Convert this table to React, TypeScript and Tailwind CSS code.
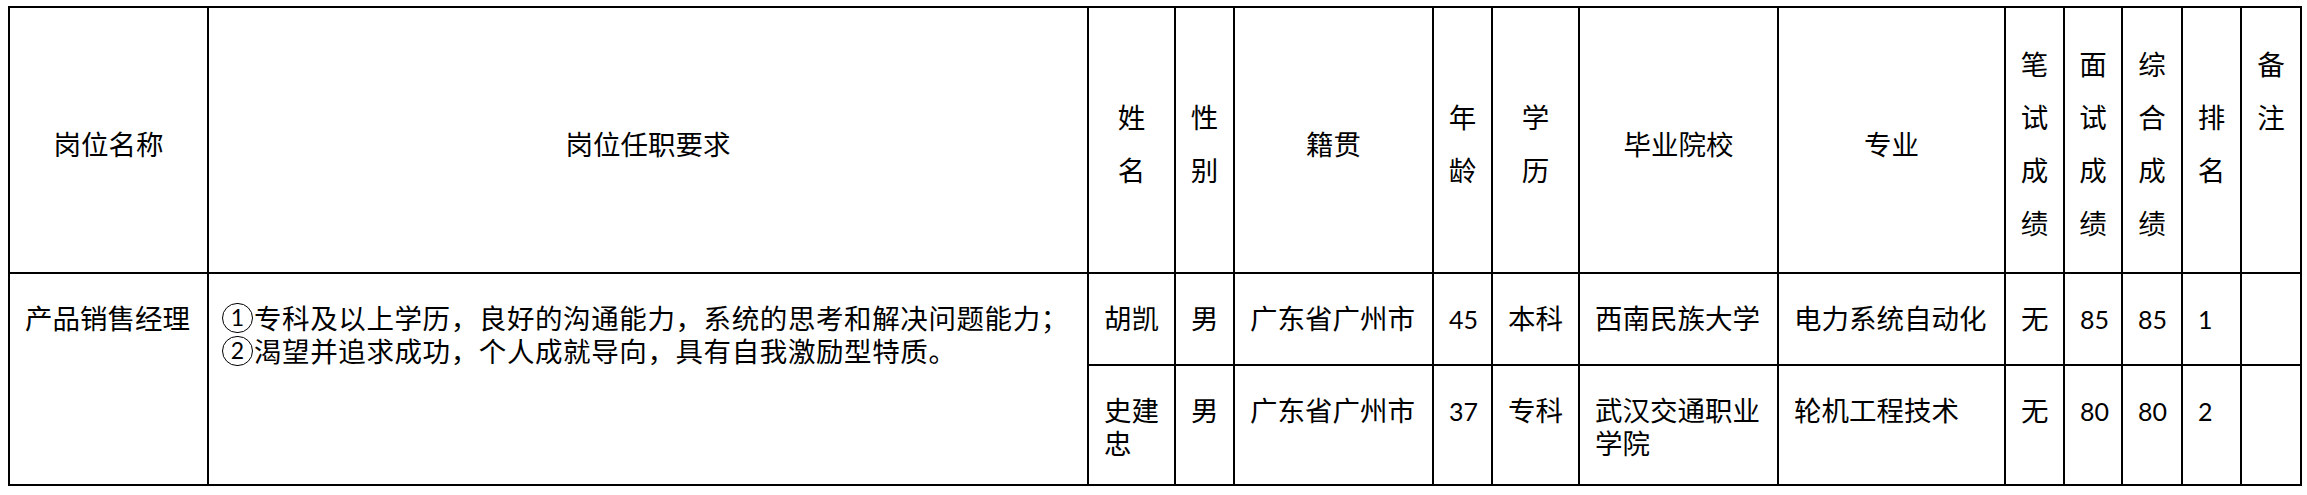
const header: { label: string; vertical?: string[] }[] = [
  { label: "岗位名称" },
  { label: "岗位任职要求" },
  { label: "姓名", vertical: ["姓", "名"] },
  { label: "性别", vertical: ["性", "别"] },
  { label: "籍贯" },
  { label: "年龄", vertical: ["年", "龄"] },
  { label: "学历", vertical: ["学", "历"] },
  { label: "毕业院校" },
  { label: "专业" },
  { label: "笔试成绩", vertical: ["笔", "试", "成", "绩"] },
  { label: "面试成绩", vertical: ["面", "试", "成", "绩"] },
  { label: "综合成绩", vertical: ["综", "合", "成", "绩"] },
  { label: "排名", vertical: ["排", "名"] },
  // 备注 sits on the first two lines of a four-line block
  { label: "备注", vertical: ["备", "注", "", ""] },
];

const candidates = [
  ["胡凯", "男", "广东省广州市", "45", "本科", "西南民族大学", "电力系统自动化", "无", "85", "85", "1", ""],
  ["史建忠", "男", "广东省广州市", "37", "专科", "武汉交通职业学院", "轮机工程技术", "无", "80", "80", "2", ""],
];

const requirements = [
  "专科及以上学历，良好的沟通能力，系统的思考和解决问题能力；",
  "渴望并追求成功，个人成就导向，具有自我激励型特质。",
];

const cell = "border-r-2 border-b-2 border-black";

const Value = ({ text }: { text: string }) =>
  /^\d+$/.test(text) ? <span className="font-['Lato',sans-serif] text-[25px]">{text}</span> : <>{text}</>;

// circled list number, drawn as a ring so it matches the wider glyph in the original
const Circled = ({ n }: { n: number }) => (
  <span className="mr-[1px] inline-block h-[30px] w-[31px] overflow-hidden rounded-full border-[1.5px] border-black text-center align-[-4px] font-['Lato',sans-serif] text-[23px] leading-[27px] tracking-normal">
    {n}
  </span>
);

export default function App() {
  return (
    <div className="min-h-screen bg-white pt-[6px] pl-[8px] text-black font-['Noto_Sans_CJK_SC',sans-serif] text-[27.5px]">
      <div className="grid w-fit grid-cols-[199px_880px_87px_59px_199px_59px_87px_199px_227px_59px_58px_60px_59px_60px] grid-rows-[266px_92px_120px] border-t-2 border-l-2 border-black">
        {/* Header */}
        {header.map((h) => (
          <div key={h.label} className={`${cell} flex items-center justify-center pt-[6px]`}>
            {h.vertical ? (
              <div className="flex flex-col items-center">
                {h.vertical.map((ch, i) => (
                  <span key={i} className="block h-[53px] leading-[53px]">
                    {ch}
                  </span>
                ))}
              </div>
            ) : (
              <span className="leading-[33px]">{h.label}</span>
            )}
          </div>
        ))}

        {/* Position, spans both candidates */}
        <div className={`${cell} row-span-2 pt-[27px] pl-[15px] leading-[33px]`}>产品销售经理</div>
        <div className={`${cell} row-span-2 pt-[27px] pl-[13px] pr-[4px] leading-[33px] tracking-[0.6px]`}>
          {requirements.map((r, i) => (
            <p key={i}>
              <Circled n={i + 1} />
              {r}
            </p>
          ))}
        </div>

        {candidates.map((row, r) =>
          row.map((v, c) => (
            <div key={`${r}-${c}`} className={`${cell} pt-[27px] pl-[15px] pr-[8px] leading-[33px]`}>
              <Value text={v} />
            </div>
          ))
        )}
      </div>
    </div>
  );
}
